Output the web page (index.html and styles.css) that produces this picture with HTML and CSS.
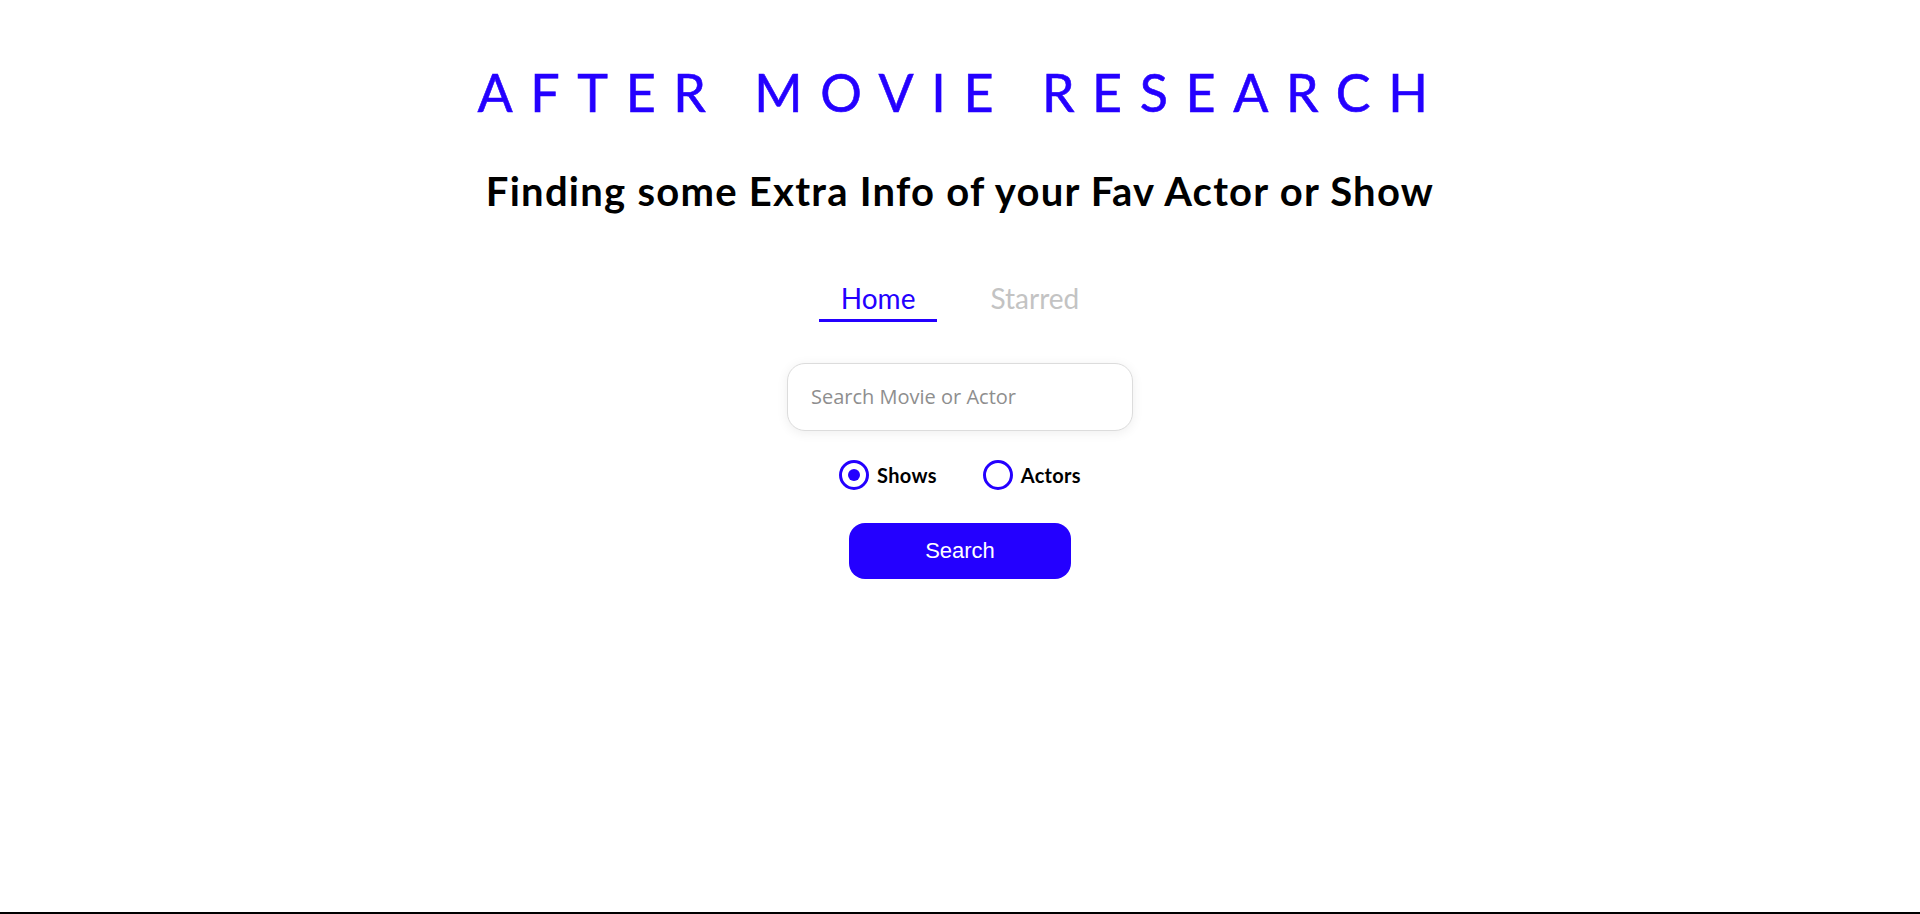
FILE: index.html
```html
<!DOCTYPE html>
<html lang="en">
<head>
<meta charset="utf-8">
<title>After Movie Research</title>
<link rel="stylesheet" href="styles.css">
</head>
<body>
<div class="page">
  <header class="header">
    <h1 class="title">AFTER MOVIE RESEARCH</h1>
    <p class="subtitle">Finding some Extra Info of your Fav Actor or Show</p>
  </header>
  <nav class="nav">
    <a class="nav-link active" href="#">Home</a>
    <a class="nav-link" href="#">Starred</a>
  </nav>
  <main class="search">
    <input class="search-input" type="text" placeholder="Search Movie or Actor">
    <div class="radios">
      <label class="radio">
        <span class="radio-circle checked"></span>
        <span class="radio-label">Shows</span>
      </label>
      <label class="radio">
        <span class="radio-circle"></span>
        <span class="radio-label">Actors</span>
      </label>
    </div>
    <button class="search-btn" type="button">Search</button>
  </main>
</div>
</body>
</html>
```
FILE: styles.css
```css
* { box-sizing: border-box; }
html, body { margin: 0; padding: 0; }
body {
  background: #fff;
  font-family: Lato, "Noto Sans", sans-serif;
  color: #000;
}
.page {
  min-height: 100vh;
  border-bottom: 2px solid #000;
  display: flex;
  flex-direction: column;
  align-items: center;
}
.header {
  display: flex;
  flex-direction: column;
  align-items: center;
  padding-top: 61px;
}
.title {
  margin: 0;
  font-size: 52px;
  line-height: 1.2;
  font-weight: 400;
  letter-spacing: 17.6px;
  color: #2400ff;
  padding-left: 3px;
  -webkit-text-stroke: 0.6px #2400ff;
}
.subtitle {
  margin: 44px 0 0;
  font-size: 40px;
  line-height: 1.2;
  font-weight: 700;
  letter-spacing: 1.25px;
}
.nav {
  display: flex;
  gap: 31px;
  margin-top: 65px;
}
.nav-link {
  font-size: 28px;
  line-height: 1.2;
  padding: 2px 22px 3px;
  border-bottom: 3px solid transparent;
  text-decoration: none;
  color: #c3c3c3;
}
.nav-link.active {
  color: #2400ff;
  border-bottom-color: #2400ff;
}
.search {
  display: flex;
  flex-direction: column;
  align-items: center;
  margin-top: 41px;
}
.search-input {
  width: 346px;
  height: 68px;
  border: 1px solid #dcdcdc;
  border-radius: 18px;
  padding: 0 23px;
  font-family: "Open Sans", sans-serif;
  font-size: 20px;
  color: #333;
  box-shadow: 0 2px 12px rgba(0, 0, 0, 0.07);
  outline: none;
}
.search-input::placeholder { color: #8e8e8e; }
.radios {
  display: flex;
  gap: 46px;
  margin-top: 29px;
}
.radio {
  display: flex;
  align-items: center;
  gap: 8px;
}
.radio-circle {
  width: 30px;
  height: 30px;
  border: 3px solid #2400ff;
  border-radius: 50%;
  display: flex;
  align-items: center;
  justify-content: center;
}
.radio-circle.checked::after {
  content: "";
  width: 12px;
  height: 12px;
  border-radius: 50%;
  background: #2400ff;
}
.radio-label {
  font-size: 20px;
  font-weight: 700;
  letter-spacing: 0.3px;
}
.search-btn {
  margin-top: 33px;
  width: 222px;
  height: 56px;
  border: none;
  border-radius: 16px;
  background: #2400ff;
  color: #fff;
  font-family: "Liberation Sans", Arial, sans-serif;
  font-size: 22px;
}
```
